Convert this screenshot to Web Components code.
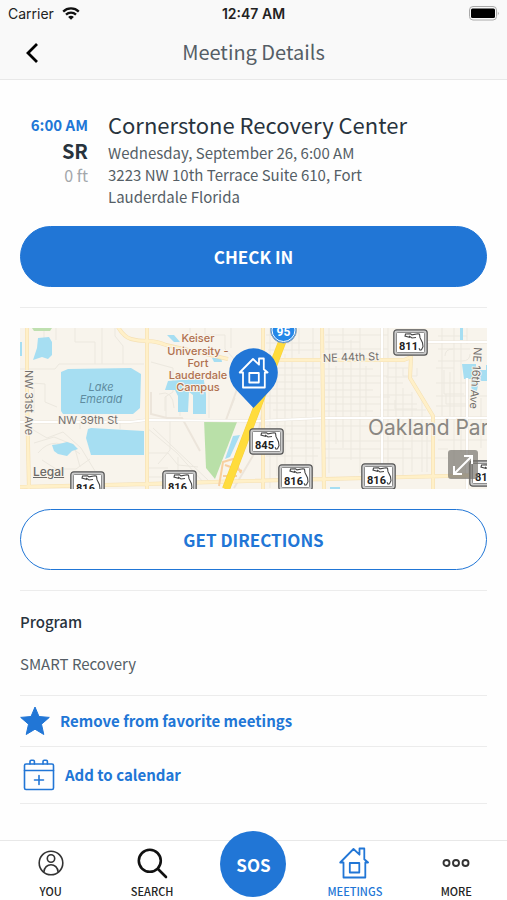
<!DOCTYPE html>
<html lang="en">
<head>
  <meta charset="utf-8">
  <meta name="viewport" content="width=device-width, initial-scale=1">
  <title>Meeting Details</title>
  <style>
    :root {
      --blue: #2176d6;
      --ink: #28333d;
      --grey: #555e66;
      --light-grey: #a3a7ab;
      --line: #ececec;
      --bar: #f9f9f9;
      --system-font: Inter, "Liberation Sans", sans-serif;
    }

    body {
      margin: 0;
      color: var(--ink);
      background-color: #fefefe;
      font-family: "Noto Sans CJK SC", "Open Sans", sans-serif;
      font-size: 16px;
    }
  </style>
</head>
<body>
  <meeting-app>
    <status-bar slot="top" carrier="Carrier" time="12:47 AM"></status-bar>
    <nav-header slot="top">Meeting Details</nav-header>

    <meeting-summary>
      <span slot="time">6:00 AM</span>
      <span slot="type">SR</span>
      <span slot="distance">0 ft</span>
      <span slot="name">Cornerstone Recovery Center</span>
      <span slot="date">Wednesday, September 26, 6:00 AM</span>
      <span slot="address">3223 NW 10th Terrace Suite 610, Fort Lauderdale Florida</span>
    </meeting-summary>
    <page-section><pill-button filled>CHECK IN</pill-button></page-section>
    <page-section>
      <meeting-map></meeting-map>
      <pill-button>GET DIRECTIONS</pill-button>
    </page-section>
    <program-info>
      <span slot="label">Program</span>
      <span slot="value">SMART Recovery</span>
    </program-info>
    <action-row icon="star">Remove from favorite meetings</action-row>
    <action-row icon="calendar">Add to calendar</action-row>

    <tab-bar slot="bottom">
      <tab-item icon="you">YOU</tab-item>
      <tab-item icon="search">SEARCH</tab-item>
      <sos-button>SOS</sos-button>
      <tab-item icon="home" active>MEETINGS</tab-item>
      <tab-item icon="more">MORE</tab-item>
    </tab-bar>
  </meeting-app>

  <script>
    const icons = {
      star: `<svg width="30" height="30" viewBox="0 0 30 30"><path fill="currentColor" stroke="currentColor" stroke-linejoin="round" d="M15 1l4 9.500 10.300.9-7.800 6.800 2.300 10.300L15 23.200l-8.800 5.300 2.300-10.300L.7 11.400l10.300-.9z"/></svg>`,
      calendar: `<svg width="32" height="32" viewBox="0 0 32 32" fill="none" stroke="currentColor" stroke-width="1.600" stroke-linejoin="round" stroke-linecap="round"><rect x="1.500" y="5" width="29" height="25.500" rx="1.500"/><path d="M1.500 11.500h29M7 5V2.500q0-1.200 1.200-1.200h2q1.200 0 1.200 1.200V5M20 5V2.500q0-1.200 1.200-1.200h2q1.200 0 1.200 1.200V5M16 16.500v9M11.500 21h9"/></svg>`,
      you: `<svg width="26" height="26" viewBox="0 0 26 26" fill="none" stroke="#333" stroke-width="1.600"><circle cx="13" cy="13" r="11.800"/><circle cx="13" cy="8.500" r="3.700"/><path d="M5.800 22.300C6.300 12.200 19.700 12.200 20.200 22.300"/></svg>`,
      search: `<svg width="31" height="31" viewBox="0 0 31 31" fill="none" stroke="#111" stroke-width="2.600" stroke-linecap="round"><circle cx="12.800" cy="12.800" r="11"/><path d="M21 21l8 8"/></svg>`,
      home: `<svg width="31" height="32" viewBox="0 0 31 32" fill="none" stroke="currentColor" stroke-width="1.800" stroke-linejoin="round"><path d="M4.500 15.500H1.200L14.500 2l6 5.700V1.500h4.800v10.700l3.800 3.300h-2.800V30.500H4.500z"/><rect x="10.800" y="16" width="9.500" height="9.500"/></svg>`,
      more: `<svg width="28" height="28" viewBox="0 0 28 28" fill="none" stroke="#333" stroke-width="1.900"><circle cx="4.500" cy="14" r="3"/><circle cx="14" cy="14" r="3"/><circle cx="23.500" cy="14" r="3"/></svg>`
    }

    class BaseElement extends HTMLElement {
      constructor() {
        super();
        this.attachShadow({ mode: "open" });
        this.shadowRoot.innerHTML = this.render();
      }
    }

    class MeetingApp extends BaseElement {
      render() {
        return `
          <style>
            :host {
              display: flex;
              flex-direction: column;
              min-height: 100vh;
            }
            main {
              flex: 1;
              padding: 0 20px;
            }
          </style>
          <header><slot name="top"></slot></header>
          <main><slot></slot></main>
          <slot name="bottom"></slot>
        `
      }
    }

    class StatusBar extends BaseElement {
      render() {
        return `
          <style>
            :host {
              display: grid;
              grid-template-columns: 1fr auto 1fr;
              align-items: center;
              height: 27px;
              padding: 0 8px;
              background-color: var(--bar);
              color: #222;
              font-family: var(--system-font);
              font-size: 14px;
            }
            .carrier {
              display: flex;
              align-items: center;
              gap: 8px;
            }
            .time {
              font-weight: 600;
            }
            .battery {
              justify-self: end;
            }
          </style>
          <div class="carrier">
            <span>${this.getAttribute("carrier")}</span>
            <svg width="18" height="13" viewBox="0 0 18 13" fill="none" stroke="#111" stroke-width="2.300">
              <path d="M1.200 4.600c4.300-4.200 11.300-4.200 15.600 0M4 7.700c2.800-2.700 7.200-2.700 10 0"/>
              <path fill="#111" stroke="none" d="M9 12.700L6.100 9.900c1.600-1.500 4.200-1.500 5.800 0z"/>
            </svg>
          </div>
          <span class="time">${this.getAttribute("time")}</span>
          <svg class="battery" width="30" height="15" viewBox="0 0 30 15">
            <rect x=".5" y=".5" width="27" height="13.500" rx="3.500" fill="#f9f9f9" stroke="#aaa"/>
            <rect x="2" y="2.500" width="24" height="9.500" rx="1.500" fill="#000"/>
            <path fill="#aaa" d="M28.800 5.500q1.800 1.700 0 4z"/>
          </svg>
        `
      }
    }

    class NavHeader extends BaseElement {
      render() {
        return `
          <style>
            :host {
              display: grid;
              grid-template-columns: 64px 1fr 64px;
              align-items: center;
              height: 52px;
              background-color: var(--bar);
              border-bottom: 1px solid #e8e8e8;
            }
            button {
              padding: 0;
              border: none;
              background: none;
            }
            svg {
              display: block;
              margin: 0 auto;
            }
            h1 {
              margin: 0;
              padding-bottom: 2px;
              color: var(--grey);
              font-size: 20px;
              font-weight: 400;
              line-height: 28px;
              text-align: center;
            }
          </style>
          <button aria-label="Back">
            <svg width="14" height="20" viewBox="0 0 14 20" fill="none" stroke="#000" stroke-width="2.800"><path d="M12 1L3 10l9 9"/></svg>
          </button>
          <h1><slot></slot></h1>
        `
      }
    }

    class MeetingSummary extends BaseElement {
      render() {
        return `
          <style>
            :host {
              display: grid;
              grid-template-columns: 68px 1fr;
              gap: 20px;
              padding: 30px 60px 18px 0;
            }
            .when {
              display: flex;
              flex-direction: column;
              align-items: flex-end;
              line-height: 26px;
            }
            .time {
              color: var(--blue);
              font-weight: 700;
              font-size: 15px;
              line-height: 30px;
            }
            .type {
              font-size: 20px;
              font-weight: 700;
              line-height: 22px;
            }
            .distance {
              color: var(--light-grey);
            }
            h2 {
              margin: 0 0 4px;
              font-size: 22px;
              font-weight: 400;
              line-height: 28px;
              white-space: nowrap;
            }
            p {
              margin: 0;
              color: var(--grey);
              font-size: 15px;
              line-height: 22px;
            }
          </style>
          <div class="when">
            <div class="time"><slot name="time"></slot></div>
            <div class="type"><slot name="type"></slot></div>
            <div class="distance"><slot name="distance"></slot></div>
          </div>
          <div>
            <h2><slot name="name"></slot></h2>
            <p><slot name="date"></slot></p>
            <p><slot name="address"></slot></p>
          </div>
        `
      }
    }

    class PageSection extends BaseElement {
      render() {
        return `
          <style>
            :host {
              display: flex;
              flex-direction: column;
              gap: 20px;
              padding-bottom: 20px;
              margin-bottom: 20px;
              border-bottom: 1px solid var(--line);
            }
          </style>
          <slot></slot>
        `
      }
    }

    class PillButton extends BaseElement {
      render() {
        return `
          <style>
            :host {
              display: block;
            }
            button {
              display: block;
              box-sizing: border-box;
              width: 100%;
              height: 61px;
              padding: 0;
              border: 1px solid var(--blue);
              border-radius: 31px;
              background-color: #fff;
              color: var(--blue);
              font-family: inherit;
              font-size: 17px;
              font-weight: 700;
            }
            :host([filled]) button {
              background-color: var(--blue);
              color: #fff;
            }
          </style>
          <button><slot></slot></button>
        `
      }
    }

    // florida route shield, x and y are its top left corner
    const shield = (x, y, number) => `
      <g transform="translate(${x} ${y})">
        <rect x=".8" y=".8" width="33.400" height="25.400" rx="3" fill="#ccc" stroke="#555" stroke-width="1.200"/>
        <rect x="3.500" y="3.500" width="28" height="20" rx="1" fill="#fff" stroke="#777" stroke-width=".8"/>
        <path d="M17 8.500l-5-1.500.5-2 5-.3 1.500 1.200 6-1.200 1.500.5.500 3.500 2.500 5 .5 4-1.500 3-1.500.5-1-2M16 7l3 2 4-.5" fill="none" stroke="#444" stroke-width="1.100"/>
        <text x="15.500" y="21" text-anchor="middle" font-size="11" font-weight="700" fill="#222" stroke="#fff" paint-order="stroke">${number}</text>
      </g>`

    class MeetingMap extends BaseElement {
      render() {
        return `
          <style>
            :host {
              display: block;
              position: relative;
              font-family: var(--system-font);
            }
            .map {
              display: block;
              width: 100%;
              height: 161px;
            }
            .place {
              font-size: 11px;
              font-weight: 500;
              fill: #b0714f;
              stroke: #f8f4ec;
              stroke-width: 2px;
              paint-order: stroke;
            }
            .street {
              font-size: 11px;
              fill: #74706c;
              stroke: #f8f4ec;
              stroke-width: 2px;
              paint-order: stroke;
            }
            .shields {
              font-family: Roboto, sans-serif;
            }
            a {
              position: absolute;
              left: 13px;
              bottom: 9px;
              color: #6c6a67;
              font-size: 12px;
              font-weight: 500;
              line-height: 16px;
            }
            button {
              position: absolute;
              right: 9px;
              bottom: 10px;
              width: 30px;
              height: 29px;
              padding: 0;
              border: none;
              border-radius: 3px;
              background-color: rgba(115, 112, 106, .68);
            }
            button svg {
              display: block;
              margin: 0 auto;
            }
          </style>
          <svg class="map" viewBox="0 0 467 161" preserveAspectRatio="xMidYMid slice">
            <rect width="467" height="161" fill="#f8f4ec"/>

            <!-- side streets -->
            <g fill="none" stroke="#ece8df">
              <path d="M0 41h35l4-5h85M12 55l13 1v18l12 5M14 60v25M24 0v14M95 0v8l8 10v18M82 36V0M36 0v12M55 0v14h20v22M10 100l17 10 16-6 18 16 14 23M14 115l20-6 20 8 6 22M22 132l14 9 20 0 14-10M18 125q16-20 42 1M128 125h20l10 12 20 2M131 34l22 6v24l-8 5v14M139 66q14-5 15 14M146 68v22M127 100l30 25 27 30M133 100l55 52M128 149h30v-20M150 92v30l-12 14M128 140h20M170 0v6M185 0v7h20v14l9 10M211 0v20M160 58v30M189 90V60M215 70l-9 22M60 92v9M100 92v9"/>
              <path d="M250 0v160M257 38v110M265 26v120M272 10v140M279 0v26M286 30v115M293 0v148M309 0v145M316 38v78M323 0v120M331 12v120M340 0v145M346 38v50M368 0v148M376 32v58M383 60v90M392 64v80M402 72v72M407 98v46M422 0v88M430 44v44M434 0v145M441 14v110M447 0v16M448 46v50M461 70v50"/>
              <path d="M246 7h28M246 15h54M248 22h52M246 40h54M252 47h48M246 54h54M251 61h49M246 68h54M246 75h43M253 82h46M246 98h54M252 106h48M246 113h54M270 120h30M246 128h52M305 7h63M305 14h35M305 21h63M305 41h48M305 48h63M305 55h78M305 62h48M305 69h65M305 76h92M305 83h48M305 98h107M305 113h107M305 121h86M305 130h107M368 40h20M366 49h22M418 8h29M418 21h32M418 33h24q8 0 8-7M416 40h18M416 55h32M416 68h51M416 78h35M418 112h49M418 121h10M414 130h14M360 67h32M360 82h46"/>
              <path d="M425 28q0-7 8-7M424 42v24h20M426 66v10h20M383 40v8h14v-8M375 72v9h22" />
            </g>
            <path d="M131 64v22l16 4h15l18 33M221 50L206 92M214 160l20-34 8-40" fill="none" stroke="#ece5db" stroke-width="2"/>

            <!-- water and parks -->
            <g fill="#a6def2">
              <path d="M18 10l11-1 3 5 0 13-4 4-6-2-9 3 4-12z"/>
              <path d="M0 14h2v14H0z"/>
              <path d="M41 44l7-3 63-1 10 6-1 34-7 6-70 0-2-3z"/>
              <path d="M68 101l3-1 53 3v24l-53 0-5-17z"/>
              <path d="M32 117l7-1 8-2 6 2 5 5-6 2-5 5-9-2-4-3z"/>
              <path d="M147 7h7l6 7-6 0zM148 53l26-2 2-6 8 1v7l2 13v20h-13V67l-4-3-1 20h-10V68l-3-6-10 0zM192 30l9-1 1 5-8 0z"/>
              <path d="M213 108l7-1-10 22-5 2zM442 36h14v6h10v-5h1v16h-8l-3 14-4 6-1-22h-7zM440 0h3v12h-3zM310 159h10v2h-10zM450 148h8v3h-8z"/>
            </g>
            <path d="M184 91l33 3-22 57-9-11z" fill="#b9e0a8"/>
            <path d="M12 0h20l-2 3H14z" fill="#bfe0b0"/>

            <!-- roads -->
            <g fill="none" stroke-linejoin="round">
              <path d="M0 94h110l17-2 110 1 65-3h165M362 0v148M405 14h62M447 50v111" stroke="#e9e4da" stroke-width="3"/>
              <path d="M0 94h110l17-2 110 1 65-3h165M362 0v148M405 14h62M447 50v111" stroke="#fff" stroke-width="2"/>
              <path d="M7 0v70l2 91M127 0v161M243 0v161M302 0l2 161M98-1q6 10 13 12t16 2 19 4l62 14M259 32h125l7-3-1 21 23 38v73M0 159l127-3 100-3 240-6" stroke="#f5e0b4" stroke-width="4"/>
              <path d="M7 0v70l2 91M127 0v161M243 0v161M302 0l2 161M98-1q6 10 13 12t16 2 19 4l62 14M259 32h125l7-3-1 21 23 38v73M0 159l127-3 100-3 240-6" stroke="#fff0c8" stroke-width="2.800"/>
              <path d="M199 158l4-24 10-3 8 14M205 137l17 6M203 148h14" stroke="#f8cf9f" stroke-width="2"/>
              <path d="M264 9L206 161" stroke="#f5cf3f" stroke-width="8"/>
              <path d="M264 9L206 161" stroke="#ffdc3c" stroke-width="7"/>
            </g>

            <!-- labels -->
            <g class="place" text-anchor="middle">
              <text x="178" y="14">Keiser</text>
              <text x="178" y="27">University -</text>
              <text x="178" y="39">Fort</text>
              <text x="178" y="51">Lauderdale</text>
              <text x="178" y="63">Campus</text>
            </g>
            <g text-anchor="middle" font-size="11" font-style="italic" fill="#5f8ca0">
              <text x="81" y="63">Lake</text>
              <text x="81" y="75">Emerald</text>
            </g>
            <g class="street">
              <text x="38" y="96">NW 39th St</text>
              <text x="303" y="34" transform="rotate(-2 303 34)">NE 44th St</text>
              <text transform="translate(5 42) rotate(90)">NW 31st Ave</text>
              <text transform="translate(454 19) rotate(94)">NE 16th Ave</text>
            </g>
            <text x="348" y="107" font-size="21" fill="#8a8782" stroke="#f8f4ec" stroke-width="2" paint-order="stroke">Oakland Park</text>

            <g class="shields">
              ${shield(373, 1, "811")}
              ${shield(229, 100, "845")}
              ${shield(258, 136, "816")}
              ${shield(341, 135, "816")}
              ${shield(50, 143, "816")}
              ${shield(142, 142, "816")}
              ${shield(449, 132, "816")}
              <circle cx="263.500" cy="2" r="13" fill="#2387e8" stroke="#9aa7b3"/>
              <circle cx="263.500" cy="2" r="11.500" fill="none" stroke="#fff"/>
              <text x="263.500" y="8" text-anchor="middle" font-size="12" font-weight="700" fill="#fff">95</text>
            </g>

            <!-- meeting pin -->
            <path d="M233.500 80L216 61.500A24.300 24.300 0 1 1 251 61.500z" fill="#2176d6"/>
            <g transform="translate(218.500 29)" fill="none" stroke="#fff" stroke-width="1.800" stroke-linejoin="round">
              <path d="M4.500 15.500H1.200L14.500 2l6 5.700V1.500h4.800v10.700l3.800 3.300h-2.800V30.500H4.500z"/>
              <rect x="10.800" y="16" width="9.500" height="9.500"/>
            </g>
          </svg>
          <a href="#">Legal</a>
          <button aria-label="Expand map">
            <svg width="22" height="22" viewBox="0 0 22 22" fill="none" stroke="#fff" stroke-width="2"><path d="M2 20L20 2M12 2h8v8M2 12v8h8"/></svg>
          </button>
        `
      }
    }

    class ProgramInfo extends BaseElement {
      render() {
        return `
          <style>
            :host {
              display: flex;
              flex-direction: column;
              gap: 20px;
              padding-bottom: 20px;
              border-bottom: 1px solid var(--line);
              font-size: 15px;
              line-height: 22px;
            }
            h3 {
              margin: 0;
              font-size: 15px;
              font-weight: 500;
            }
            p {
              margin: 0;
              color: var(--grey);
            }
          </style>
          <h3><slot name="label"></slot></h3>
          <p><slot name="value"></slot></p>
        `
      }
    }

    class ActionRow extends BaseElement {
      render() {
        return `
          <style>
            :host {
              display: block;
              border-bottom: 1px solid var(--line);
            }
            button {
              display: flex;
              align-items: center;
              gap: 10px;
              width: 100%;
              padding: 10px 0;
              border: none;
              background: none;
              color: var(--blue);
              font-family: inherit;
              font-size: 15px;
              font-weight: 700;
              line-height: 30px;
            }
            :host([icon="calendar"]) button {
              padding: 12px 3px;
            }
          </style>
          <button>${icons[this.getAttribute("icon")]}<span><slot></slot></span></button>
        `
      }
    }

    class TabBar extends BaseElement {
      render() {
        return `
          <style>
            :host {
              display: block;
              border-top: 1px solid #e8e8e8;
              background-color: #fff;
            }
            nav {
              display: grid;
              grid-template-columns: repeat(5, 1fr);
              height: 59px;
            }
          </style>
          <nav><slot></slot></nav>
        `
      }
    }

    class TabItem extends BaseElement {
      render() {
        return `
          <style>
            :host {
              display: block;
            }
            a {
              display: flex;
              flex-direction: column;
              align-items: center;
              padding-top: 5px;
              color: #222;
              font-size: 11px;
              font-weight: 500;
              line-height: 16px;
              text-decoration: none;
            }
            .icon {
              display: flex;
              align-items: center;
              height: 34px;
              margin-bottom: 3px;
            }
            :host([active]) a {
              color: var(--blue);
            }
          </style>
          <a href="#"><span class="icon">${icons[this.getAttribute("icon")]}</span><slot></slot></a>
        `
      }
    }

    class SosButton extends BaseElement {
      render() {
        return `
          <style>
            :host {
              display: flex;
              justify-content: center;
            }
            button {
              width: 66px;
              height: 66px;
              margin-top: -10px;
              padding: 0;
              border: none;
              border-radius: 50%;
              background-color: var(--blue);
              color: #fff;
              font-family: inherit;
              font-size: 17px;
              font-weight: 700;
            }
          </style>
          <button><slot></slot></button>
        `
      }
    }

    window.customElements.define("meeting-app", MeetingApp);
    window.customElements.define("status-bar", StatusBar);
    window.customElements.define("nav-header", NavHeader);
    window.customElements.define("meeting-summary", MeetingSummary);
    window.customElements.define("page-section", PageSection);
    window.customElements.define("pill-button", PillButton);
    window.customElements.define("meeting-map", MeetingMap);
    window.customElements.define("program-info", ProgramInfo);
    window.customElements.define("action-row", ActionRow);
    window.customElements.define("tab-bar", TabBar);
    window.customElements.define("tab-item", TabItem);
    window.customElements.define("sos-button", SosButton);
  </script>
</body>
</html>
